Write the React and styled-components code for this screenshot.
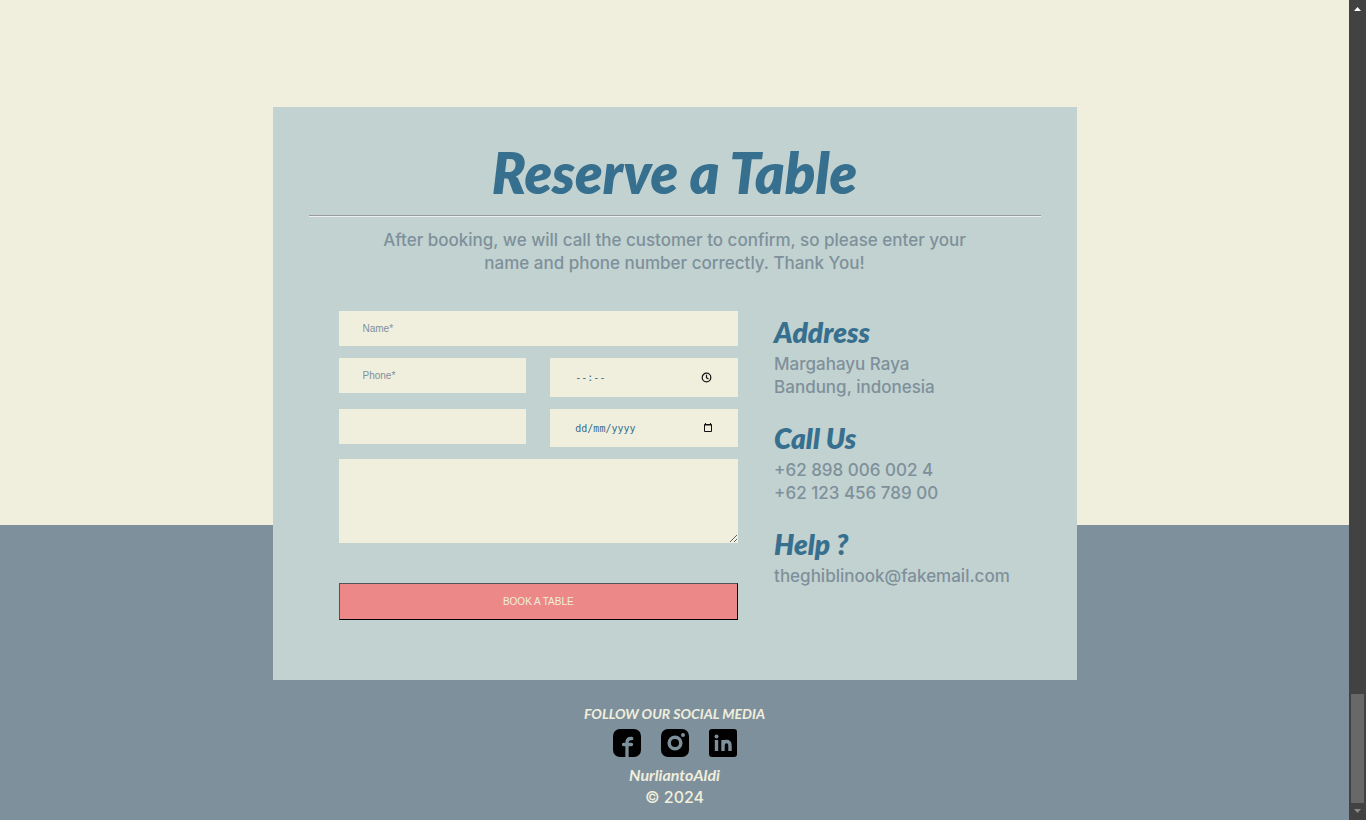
import React from 'react';
import styled, { createGlobalStyle } from 'styled-components';

const cream = '#f0eedd';
const slate = '#7e909b';
const mist = '#c2d2d0';
const blue = '#376f8f';
const script = "Lato, 'Open Sans', sans-serif";
const round = "Inter, 'Open Sans', sans-serif";

const GlobalStyle = createGlobalStyle`
  * { box-sizing: border-box; }
  body { margin: 0; font-family: ${round}; font-size: 17px; font-weight: 500; line-height: 23px; color: ${slate}; }
  h1, h2, p { margin: 0; }
  a { color: inherit; text-decoration: none; }
`;

const Page = styled.div`
  display: flex;
  min-height: 100vh;
`;

const Main = styled.main`
  flex: 1;
  display: flex;
  flex-direction: column;
  align-items: center;
  padding: 107px 24px 0;
  background: linear-gradient(${cream} 525px, ${slate} 525px);
`;

const Card = styled.section`
  width: 100%;
  max-width: 804px;
  padding: 36px 36px 60px;
  background: ${mist};
`;

const Title = styled.h1`
  font-family: ${script};
  font-size: 56px;
  font-style: italic;
  font-weight: 800;
  line-height: 60px;
  text-align: center;
  color: ${blue};
`;

const Rule = styled.hr`
  margin: 12px 0;
  border: 0;
  border-top: 1px solid #9a9a9a;
  border-bottom: 1px solid #eeeeee;
`;

const Intro = styled.p`
  max-width: 620px;
  margin: 0 auto;
  text-align: center;
`;

const Columns = styled.div`
  display: flex;
  gap: 36px;
  margin-top: 36px;
  padding-left: 30px;
`;

const Form = styled.form`
  flex: 3;
  display: grid;
  grid-template-columns: repeat(2, minmax(0, 1fr));
  column-gap: 24px;
  row-gap: 12px;
  align-items: start;
  align-content: start;
`;

const Input = styled.input`
  width: 100%;
  height: 35px;
  padding: 0 24px;
  border: 0;
  border-radius: 0;
  background: ${cream};
  color: ${blue};
  font: 10px 'Liberation Sans', sans-serif;
  grid-column: ${(p) => (p.$wide ? '1 / -1' : 'auto')};
  &::placeholder { color: ${slate}; opacity: 1; }
`;

const Picker = styled.label`
  display: flex;
  align-items: center;
  height: ${(p) => p.$height}px;
  padding: 0 24px;
  background: ${cream};
  color: #111;
`;

const PickerInput = styled.input`
  flex: 1;
  min-width: 0;
  padding: 0 1px;
  border: 0;
  background: transparent;
  color: ${blue};
  font: 10px 'DejaVu Sans Mono', monospace;
  &::placeholder { color: ${blue}; opacity: 1; }
`;

const Message = styled.textarea`
  grid-column: 1 / -1;
  display: block;
  width: 100%;
  height: 84px;
  padding: 12px 24px;
  border: 0;
  background: ${cream};
  color: ${blue};
  font: 10px 'Liberation Sans', sans-serif;
  resize: vertical;
`;

const Submit = styled.button`
  grid-column: 1 / -1;
  height: 37px;
  margin-top: 28px;
  padding: 0;
  border: 1px outset #000;
  border-radius: 0;
  background: #ec8887;
  color: ${cream};
  font: 10px 'Liberation Sans', sans-serif;
`;

const Aside = styled.div`
  flex: 2;
  display: flex;
  flex-direction: column;
  gap: 18px;
`;

const Heading = styled.h2`
  padding: 3px 0;
  font-family: ${script};
  font-size: 28px;
  font-style: italic;
  font-weight: 800;
  line-height: 36px;
  color: ${blue};
`;

const Detail = styled.p`
  font-size: 17px;
`;

const Footer = styled.footer`
  display: flex;
  flex-direction: column;
  align-items: center;
  padding: 23px 0 11px;
  line-height: 22px;
  color: ${cream};
`;

const Script = styled.p`
  font-family: ${script};
  font-size: ${(p) => p.$size}px;
  font-style: italic;
  font-weight: 700;
`;

const Copyright = styled.p`
  font-size: 16px;
`;

const Socials = styled.nav`
  display: flex;
  gap: 20px;
  padding: 4px 0 7px;
  a { display: block; height: 28px; color: #000; }
  svg { display: block; }
`;

const Scrollbar = styled.div`
  position: sticky;
  top: 0;
  width: 17px;
  height: 100vh;
  display: flex;
  flex-direction: column;
  align-items: center;
  background: #424242;
  svg { display: block; flex: none; }
`;

const Track = styled.div`
  flex: 1;
  display: flex;
  align-items: flex-end;
`;

const Thumb = styled.div`
  width: 13px;
  height: 109px;
  background: #686868;
`;

const contacts = [
  { title: 'Address', lines: ['Margahayu Raya', 'Bandung, indonesia'] },
  { title: 'Call Us', lines: ['+62 898 006 002 4', '+62 123 456 789 00'] },
];

export default function App() {
  return (
    <>
      <GlobalStyle />
      <Page>
        <Main>
          <Card>
            <Title>Reserve a Table</Title>
            <Rule />
            <Intro>
              After booking, we will call the customer to confirm, so please enter your
              name and phone number correctly. Thank You!
            </Intro>
            <Columns>
              <Form onSubmit={(e) => e.preventDefault()}>
                <Input $wide type="text" placeholder="Name*" aria-label="Name" />
                <Input type="tel" placeholder="Phone*" aria-label="Phone" />
                <Picker $height={39}>
                  <PickerInput type="text" placeholder="--:--" aria-label="Time" />
                  <svg width="15" height="13" viewBox="0 0 15 13" fill="none" stroke="currentColor" strokeWidth="1.2">
                    <circle cx="7.5" cy="6.5" r="4.3" />
                    <path d="M7.5 3.8v2.9l2 1.3" />
                  </svg>
                </Picker>
                <Input type="text" aria-label="Guests" />
                <Picker $height={38}>
                  <PickerInput type="text" placeholder="dd/mm/yyyy" aria-label="Date" />
                  <svg width="12" height="12" viewBox="0 0 12 12" fill="none" stroke="currentColor">
                    <path d="M2.500 2.500h7v7h-7zM2.500 3h7M3.500 1v1M8.500 1v1" />
                  </svg>
                </Picker>
                <Message aria-label="Message" />
                <Submit type="submit">BOOK A TABLE</Submit>
              </Form>
              <Aside>
                {contacts.map((c) => (
                  <div key={c.title}>
                    <Heading>{c.title}</Heading>
                    {c.lines.map((l) => <Detail key={l}>{l}</Detail>)}
                  </div>
                ))}
                <div>
                  <Heading>Help ?</Heading>
                  <Detail><a href="mailto:theghiblinook@fakemail.com">theghiblinook@fakemail.com</a></Detail>
                </div>
              </Aside>
            </Columns>
          </Card>
          <Footer>
            <Script $size={14}>FOLLOW OUR SOCIAL MEDIA</Script>
            <Socials>
              <a href="#facebook" aria-label="Facebook">
                <svg width="28" height="28" viewBox="0 0 28 28">
                  <rect width="28" height="28" rx="7" fill="currentColor" />
                  <path d="M14 28V13.500Q14 9.500 18 9.500H18.800M10.500 15.500H18.500" fill="none" stroke={slate} strokeWidth="3.300" strokeLinecap="round" />
                </svg>
              </a>
              <a href="#instagram" aria-label="Instagram">
                <svg width="28" height="28" viewBox="0 0 28 28">
                  <rect width="28" height="28" rx="7" fill="currentColor" />
                  <circle cx="14" cy="14" r="5.800" fill="none" stroke={slate} strokeWidth="3.500" />
                  <circle cx="22" cy="6" r="2" fill={slate} />
                </svg>
              </a>
              <a href="#linkedin" aria-label="LinkedIn">
                <svg width="28" height="28" viewBox="0 0 28 28">
                  <rect width="28" height="28" rx="3" fill="currentColor" />
                  <circle cx="7.500" cy="7.500" r="2" fill={slate} />
                  <path d="M7.500 11v11M14 22V11M14 16.500Q14 12.500 17.500 12.500T21 16.500V22" fill="none" stroke={slate} strokeWidth="3.400" />
                </svg>
              </a>
            </Socials>
            <Script $size={16}>NurliantoAldi</Script>
            <Copyright>© 2024</Copyright>
          </Footer>
        </Main>
        <Scrollbar aria-hidden="true">
          <svg width="17" height="17" viewBox="0 0 17 17"><path d="M5 11L8.500 7L12 11z" fill="#fff" /></svg>
          <Track><Thumb /></Track>
          <svg width="17" height="17" viewBox="0 0 17 17"><path d="M5 6h7L8.500 10z" fill="#8a8a8a" /></svg>
        </Scrollbar>
      </Page>
    </>
  );
}
